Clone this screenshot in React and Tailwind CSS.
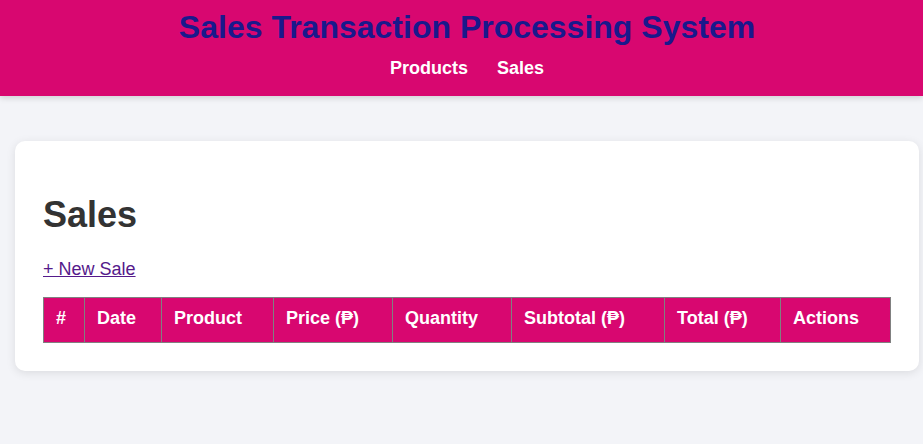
export default function App() {
  const cols = [
    ["#", 41],
    ["Date", 77],
    ["Product", 112],
    ["Price (₱)", 119],
    ["Quantity", 119],
    ["Subtotal (₱)", 153],
    ["Total (₱)", 116],
    ["Actions", 110],
  ];
  return (
    <div className="min-h-[444px] bg-[#f3f4f8] font-['Liberation_Sans',Arial,sans-serif] text-[18px]">
      <header className="h-[96px] bg-[#d80770] shadow-[0_2px_6px_rgba(0,0,0,0.15)] flex flex-col items-center pt-[8px] pl-[11px]">
        <h1 className="m-0 text-[32px] leading-[38px] font-bold text-[#19198c]">
          Sales Transaction Processing System
        </h1>
        <nav className="mt-[12px] flex gap-[29px] text-white font-bold leading-[21px]">
          <a href="#" className="text-white no-underline">Products</a>
          <a href="#" className="text-white no-underline">Sales</a>
        </nav>
      </header>
      <main className="pt-[45px] pl-[15px]">
        <div className="w-[904px] bg-white rounded-[10px] shadow-[0_2px_10px_rgba(0,0,0,0.1)] pt-[53px] pl-[28px] pr-[29px] pb-[28px]">
          <h2 className="m-0 text-[36px] leading-[41px] font-bold text-[#333333]">Sales</h2>
          <a href="#" className="block mt-[24px] leading-[21px] text-[#551a8b] underline w-fit">+ New Sale</a>
          <table className="mt-[17px] border-collapse table-fixed w-[847px]">
            <thead>
              <tr className="bg-[#d80770]">
                {cols.map(([label, w]) => (
                  <th
                    key={label}
                    style={{ width: w }}
                    className="border border-[#808080] text-left text-white font-bold px-[12px] pt-[10px] pb-[13px] leading-[21px] whitespace-nowrap"
                  >
                    {label}
                  </th>
                ))}
              </tr>
            </thead>
          </table>
        </div>
      </main>
    </div>
  );
}
